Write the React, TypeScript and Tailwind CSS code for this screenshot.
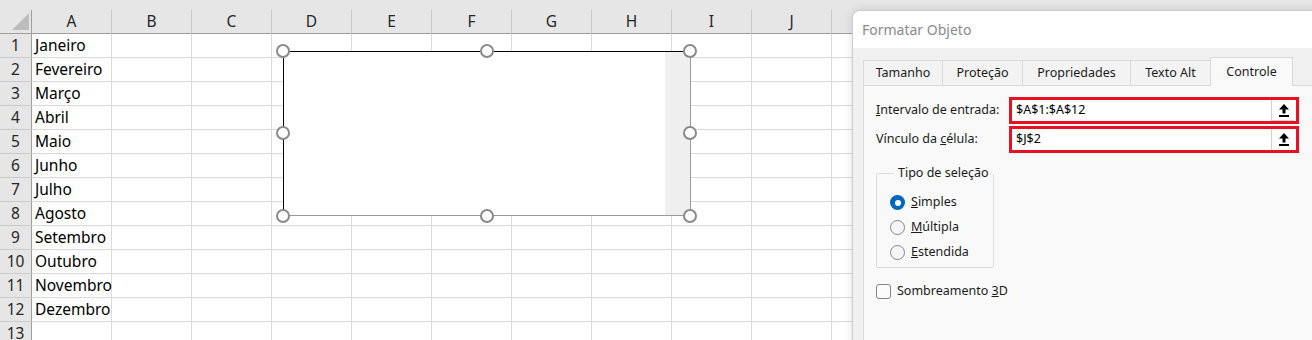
import { Fragment } from 'react'

const COLS = ['A', 'B', 'C', 'D', 'E', 'F', 'G', 'H', 'I', 'J', 'K']
const MONTHS = [
  'Janeiro',
  'Fevereiro',
  'Março',
  'Abril',
  'Maio',
  'Junho',
  'Julho',
  'Agosto',
  'Setembro',
  'Outubro',
  'Novembro',
  'Dezembro',
  '',
]

function Sheet() {
  return (
    <div className="font-['Noto_Sans',sans-serif] text-[15.5px] text-black">
      <div className="h-[10px] bg-[#e6e6e6]" />
      <div className="grid grid-cols-[32px_repeat(11,80px)]">
        <div className="relative h-6 bg-[#e6e6e6] border-r border-b border-[#9e9e9e]">
          <svg className="absolute left-[12px] top-[3px]" width="17" height="17" viewBox="0 0 17 17">
            <polygon points="17,0 17,17 0,17" fill="#bdbdbd" />
          </svg>
        </div>
        {COLS.map((c) => (
          <div
            key={c}
            className="h-6 flex items-center justify-center bg-[#e6e6e6] border-r border-r-[#cacaca] border-b border-b-[#9e9e9e] text-[#262626]"
          >
            {c}
          </div>
        ))}
        {MONTHS.map((m, i) => (
          <Fragment key={i}>
            <div className="h-6 flex items-center justify-center pt-px bg-[#e6e6e6] border-r border-r-[#9e9e9e] border-b border-b-[#cacaca] text-[#262626]">
              {i + 1}
            </div>
            <div className="h-6 flex items-center pl-[3px] pt-px whitespace-nowrap border-r border-b border-[#dadada]">
              {m}
            </div>
            {COLS.slice(1).map((c) => (
              <div key={c} className="h-6 border-r border-b border-[#dadada]" />
            ))}
          </Fragment>
        ))}
      </div>
    </div>
  )
}

function Handle({ className }: { className: string }) {
  return (
    <div
      className={`absolute w-[14px] h-[14px] rounded-full border-2 border-[#8a8a8a] bg-white ${className}`}
    />
  )
}

function ListBox() {
  return (
    <>
      <div className="absolute left-[283px] top-[51px] w-[408px] h-[165px] bg-white border-l border-t border-l-black border-t-black border-r border-b border-r-[#9a9a9a] border-b-[#9a9a9a]">
        <div className="absolute right-0 top-0 bottom-0 w-[25px] bg-[#efefef]" />
      </div>
      <Handle className="left-[276px] top-[44px]" />
      <Handle className="left-[480px] top-[44px]" />
      <Handle className="left-[683px] top-[44px]" />
      <Handle className="left-[276px] top-[126px]" />
      <Handle className="left-[683px] top-[126px]" />
      <Handle className="left-[276px] top-[209px]" />
      <Handle className="left-[480px] top-[209px]" />
      <Handle className="left-[683px] top-[209px]" />
    </>
  )
}

function UploadIcon() {
  return (
    <svg width="12" height="15" viewBox="0 0 12 15">
      <polygon points="6,1 11,6.5 7.5,6.5 7.5,10.5 4.5,10.5 4.5,6.5 1,6.5" fill="#000" />
      <rect x="1" y="12" width="10" height="2" fill="#000" />
    </svg>
  )
}

function RefField({ label, value, bottomBorder }: { label: React.ReactNode; value: string; bottomBorder?: boolean }) {
  return (
    <div className="flex items-center h-[27px]">
      <span className="w-[133px] whitespace-nowrap">{label}</span>
      <div className="w-[290px] h-full border-[3px] border-[#e81123] bg-white flex items-stretch">
        <span className="flex-1 flex items-center pl-[4px] text-black">{value}</span>
        <button
          className={`w-[25px] bg-white border-l border-[#d2d2d2] rounded-br-[3px] flex items-center justify-center ${bottomBorder ? 'border-b' : ''}`}
        >
          <UploadIcon />
        </button>
      </div>
    </div>
  )
}

function Radio({ checked, children }: { checked?: boolean; children: React.ReactNode }) {
  return (
    <div className="flex items-center h-[25px] gap-[6px]">
      {checked ? (
        <span className="w-[15px] h-[15px] rounded-full bg-[#0067c0] flex items-center justify-center">
          <span className="w-[6px] h-[6px] rounded-full bg-white" />
        </span>
      ) : (
        <span className="w-[15px] h-[15px] rounded-full border border-[#858585] bg-[#f6f6f6]" />
      )}
      <span>{children}</span>
    </div>
  )
}

const TABS = [
  { name: 'Tamanho', w: 'w-[79px]' },
  { name: 'Proteção', w: 'w-[80px]' },
  { name: 'Propriedades', w: 'w-[108px]' },
  { name: 'Texto Alt', w: 'w-[80px]' },
]

function Dialog() {
  return (
    <div className="absolute left-[852px] top-[10px] w-[490px] h-[350px] rounded-tl-[8px] border border-[#cdcdcd] bg-[#f0f0f0] shadow-[0_0_10px_rgba(0,0,0,0.12)] overflow-hidden flex flex-col font-['Noto_Sans',sans-serif] text-[12.5px] text-[#1b1b1b]">
      <div className="h-[37px] shrink-0 bg-white flex items-center pl-[9px] text-[14px] text-[#8a8a8a]">
        Formatar Objeto
      </div>
      <div className="flex-1 flex flex-col pl-[10px] pt-[9px]">
        <div className="flex items-end h-[28px]">
          {TABS.map((t) => (
            <div
              key={t.name}
              className={`${t.w} h-[25px] flex items-center justify-center bg-[#f3f3f3] border-l border-t border-[#d9d9d9]`}
            >
              {t.name}
            </div>
          ))}
          <div className="relative z-10 w-[83px] h-[29px] -mb-px flex items-center justify-center bg-[#f9f9f9] border-l border-t border-r border-[#d9d9d9]">
            Controle
          </div>
        </div>
        <div className="flex-1 bg-[#f9f9f9] border-l border-t border-[#d9d9d9] pl-[12px] pt-[11px]">
          <div className="flex flex-col gap-[2px]">
            <RefField label={<><u>I</u>ntervalo de entrada:</>} value="$A$1:$A$12" bottomBorder />
            <RefField label={<>Vínculo da <u>c</u>élula:</>} value="$J$2" />
          </div>
          <fieldset className="mt-[12px] w-[118px] h-[103px] border border-[#dcdcdc] rounded-[2px] pl-[13px]">
            <legend className="ml-[4px] px-[4px] leading-[16px]">Tipo de seleção</legend>
            <div className="mt-[9px] flex flex-col">
              <Radio checked>
                <u>S</u>imples
              </Radio>
              <Radio>
                <u>M</u>últipla
              </Radio>
              <Radio>
                <u>E</u>stendida
              </Radio>
            </div>
          </fieldset>
          <div className="mt-[15px] flex items-center gap-[6px] h-[16px]">
            <span className="w-[15px] h-[15px] rounded-[3px] border border-[#858585] bg-[#fbfbfb]" />
            <span>
              Sombreamento <u>3</u>D
            </span>
          </div>
        </div>
      </div>
    </div>
  )
}

export default function App() {
  return (
    <div className="relative w-[1312px] h-[340px] overflow-hidden bg-white">
      <Sheet />
      <ListBox />
      <Dialog />
    </div>
  )
}
